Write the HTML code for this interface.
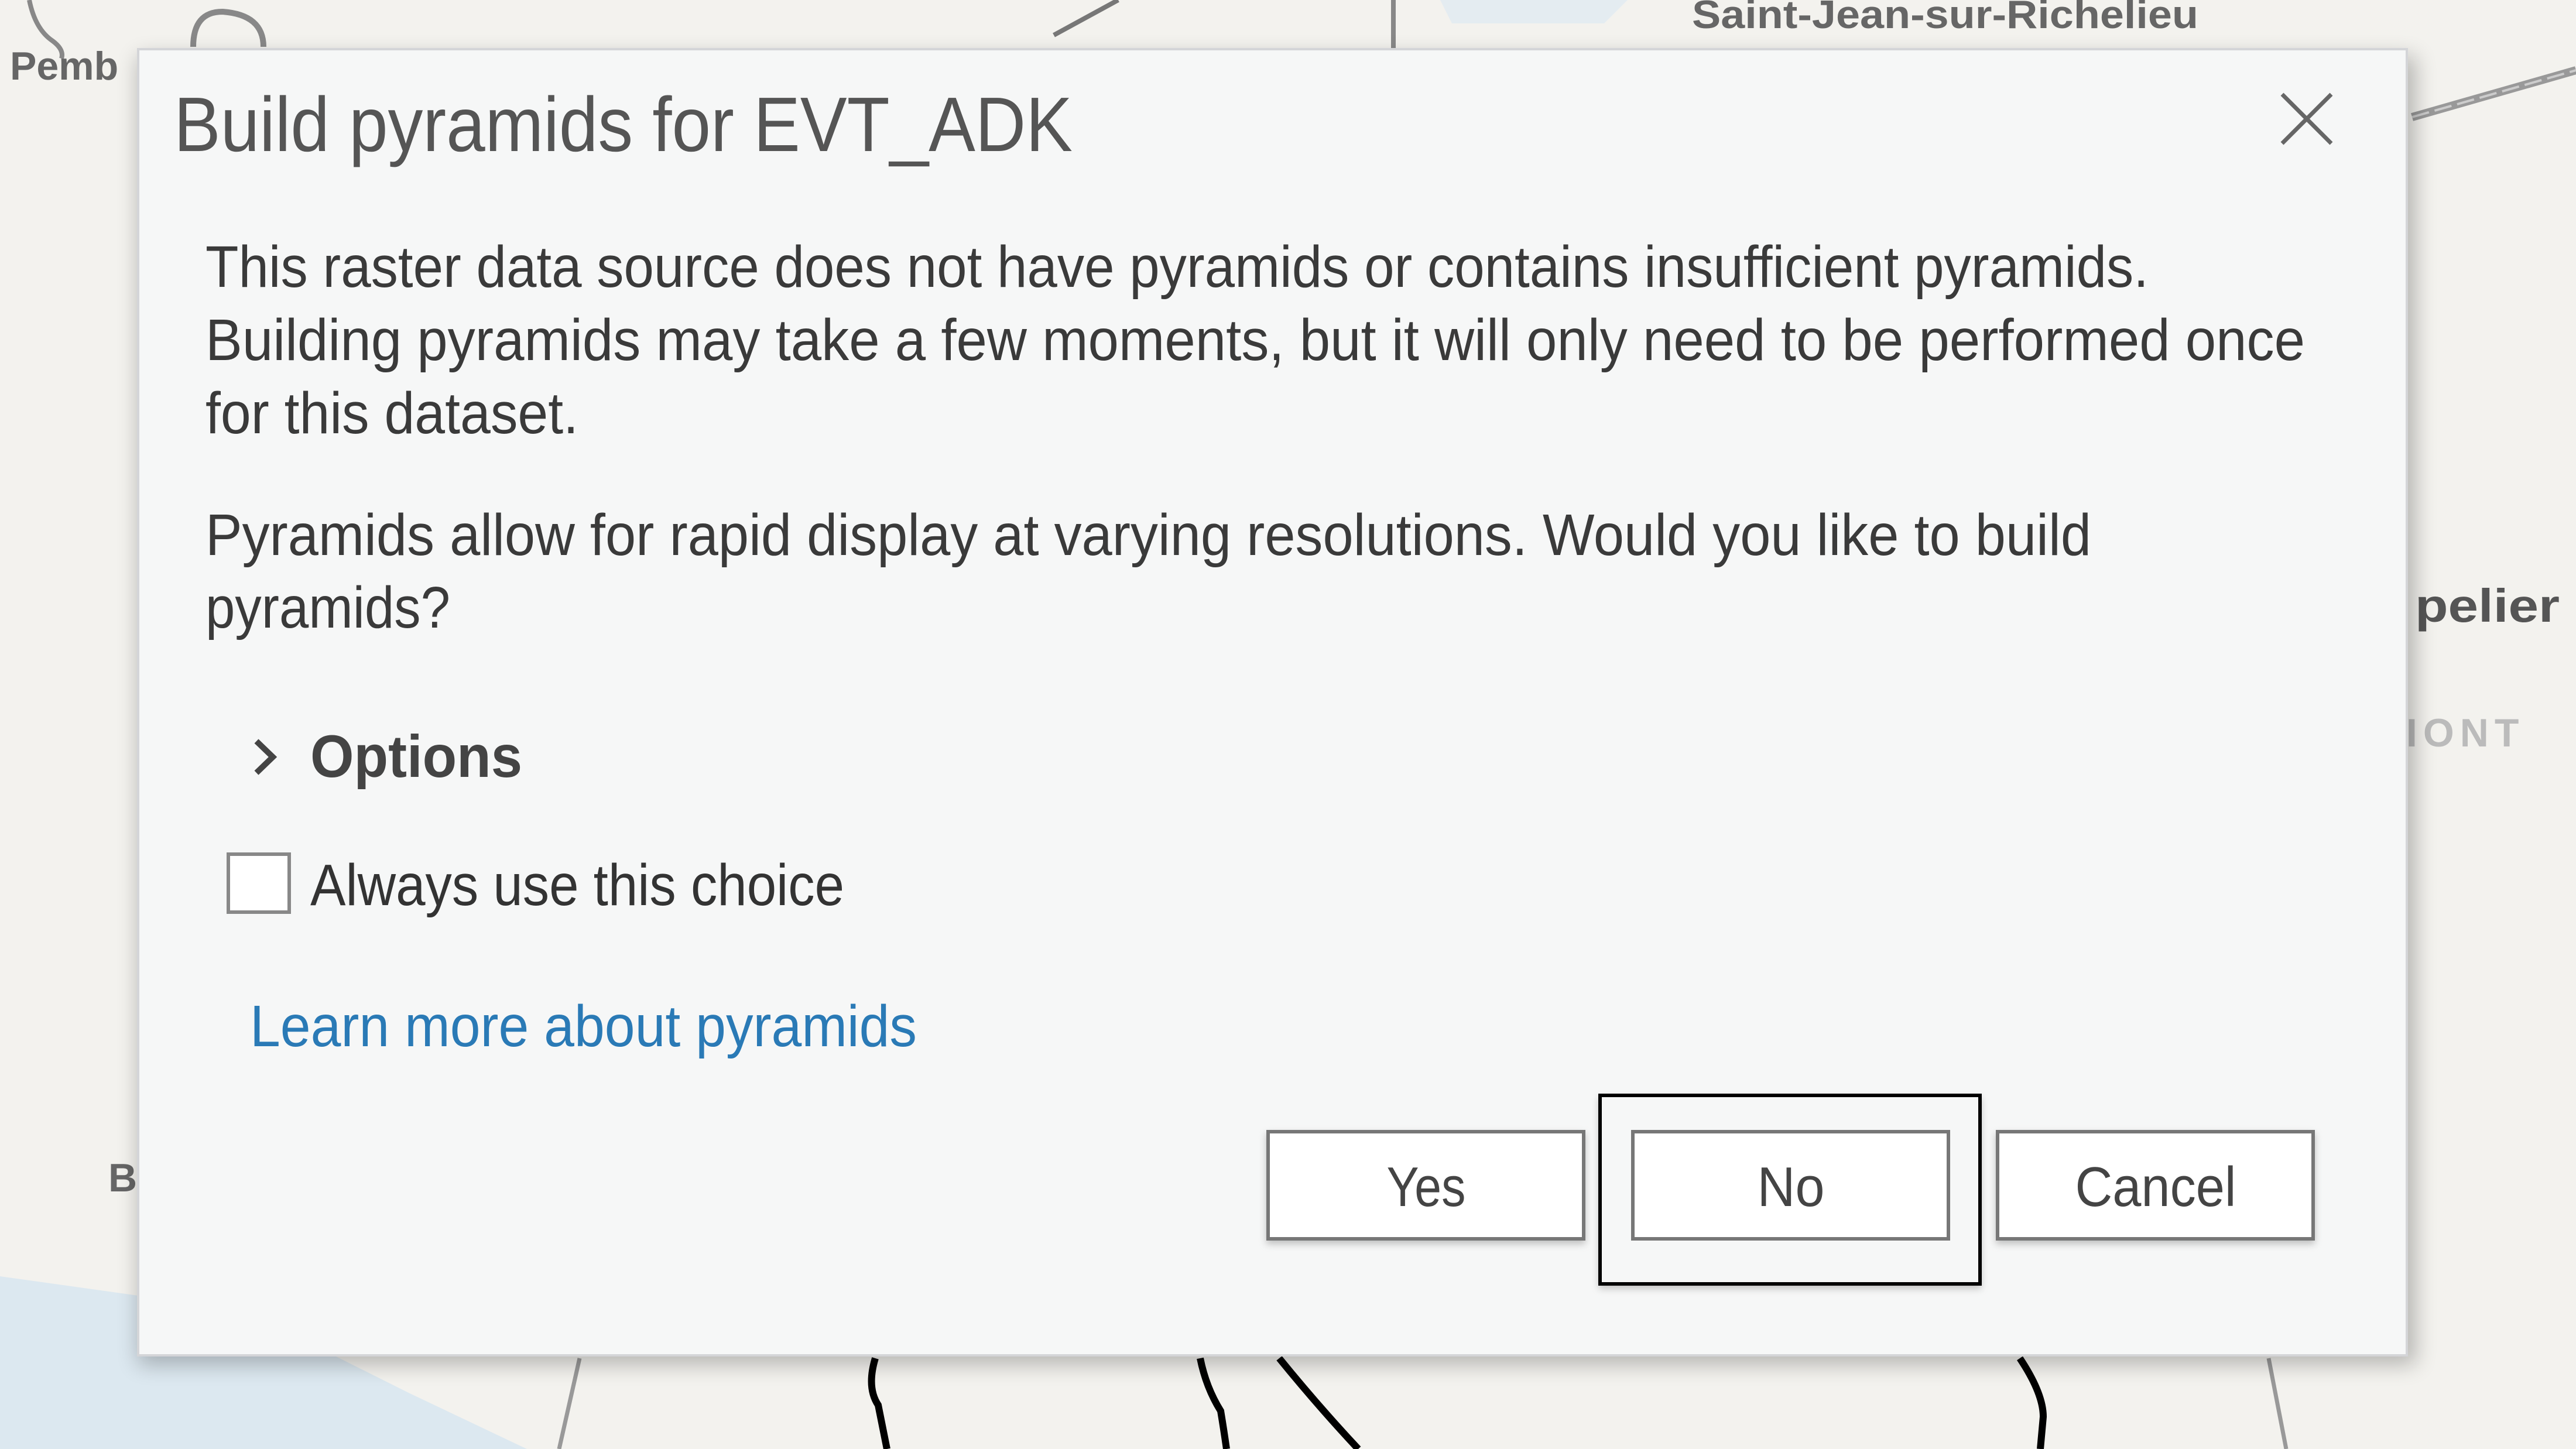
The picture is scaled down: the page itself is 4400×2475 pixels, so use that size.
<!DOCTYPE html>
<html><head><meta charset="utf-8"><style>
html,body{margin:0;padding:0;width:4400px;height:2475px;overflow:hidden;background:#f3f2ee}
svg{display:block}
</style></head><body>
<svg width="4400" height="2475" viewBox="0 0 4400 2475" xmlns="http://www.w3.org/2000/svg" font-family="'Liberation Sans', sans-serif">
<defs>
<filter id="sh" x="-5%" y="-5%" width="110%" height="112%"><feGaussianBlur stdDeviation="18"/></filter>
<filter id="bs" x="-10%" y="-20%" width="120%" height="150%"><feGaussianBlur stdDeviation="6"/></filter>
</defs>
<rect width="4400" height="2475" fill="#f3f2ee"/>
<path d="M0 2180 L250 2215 L520 2290 L700 2380 L900 2475 L0 2475 Z" fill="#dce8f0"/>
<path d="M2460 0 L2780 0 L2740 40 L2480 40 Z" fill="#e4ecf1"/>
<path d="M50 0 Q60 50 90 70 Q110 85 105 100" stroke="#888" stroke-width="8" fill="none"/>
<path d="M330 80 Q330 20 380 20 Q450 25 450 80" stroke="#888" stroke-width="10" fill="none"/>
<path d="M1800 60 L1910 0" stroke="#777" stroke-width="8" fill="none"/>
<path d="M2380 0 L2380 130" stroke="#888" stroke-width="8" fill="none"/>
<path d="M4120 200 L4400 120" stroke="#999" stroke-width="14" fill="none"/>
<path d="M4120 200 L4400 120" stroke="#ccc" stroke-width="4" fill="none" stroke-dasharray="30 10"/>
<path d="M990 2320 L955 2475" stroke="#999" stroke-width="7" fill="none"/>
<path d="M3875 2320 L3905 2475" stroke="#999" stroke-width="7" fill="none"/>
<path d="M1495 2320 Q1480 2370 1500 2400 L1515 2475" stroke="#000" stroke-width="12" fill="none"/>
<path d="M2050 2320 Q2060 2370 2085 2410 Q2090 2440 2095 2475" stroke="#000" stroke-width="12" fill="none"/>
<path d="M2185 2320 Q2250 2400 2320 2475" stroke="#000" stroke-width="12" fill="none"/>
<path d="M3450 2320 Q3490 2380 3490 2420 L3485 2475" stroke="#000" stroke-width="12" fill="none"/>
<text x="2890" y="48" font-size="68" font-weight="bold" fill="#666" textLength="865" lengthAdjust="spacingAndGlyphs">Saint-Jean-sur-Richelieu</text>
<text x="17" y="136" font-size="68" font-weight="bold" fill="#666">Pemb</text>
<text x="4125" y="1062" font-size="80" font-weight="bold" fill="#555" textLength="247" lengthAdjust="spacingAndGlyphs">pelier</text>
<text x="4110" y="1275" font-size="68" font-weight="bold" fill="#bbb" letter-spacing="10">IONT</text>
<text x="185" y="2035" font-size="68" font-weight="bold" fill="#666">B</text>
<rect x="236" y="96" width="3890" height="2235" fill="#000" opacity="0.25" filter="url(#sh)"/>
<rect x="236" y="84" width="3875" height="2231" fill="#f6f7f7" stroke="#d4d5d8" stroke-width="4"/>
<text x="297" y="258" font-size="132" fill="#555" textLength="1535" lengthAdjust="spacingAndGlyphs">Build pyramids for EVT_ADK</text>
<path d="M3898 161 L3982 245 M3982 161 L3898 245" stroke="#666" stroke-width="7"/>
<g font-size="100" fill="#3a3a3a">
<text x="351" y="490" textLength="3319" lengthAdjust="spacingAndGlyphs">This raster data source does not have pyramids or contains insufficient pyramids.</text>
<text x="351" y="615" textLength="3586" lengthAdjust="spacingAndGlyphs">Building pyramids may take a few moments, but it will only need to be performed once</text>
<text x="351" y="740" textLength="637" lengthAdjust="spacingAndGlyphs">for this dataset.</text>
<text x="351" y="948" textLength="3221" lengthAdjust="spacingAndGlyphs">Pyramids allow for rapid display at varying resolutions. Would you like to build</text>
<text x="351" y="1072" textLength="418" lengthAdjust="spacingAndGlyphs">pyramids?</text>
</g>
<path d="M438 1266 L466 1293 L438 1320" stroke="#444" stroke-width="10" fill="none"/>
<text x="530" y="1327" font-size="102" font-weight="bold" fill="#444" textLength="362" lengthAdjust="spacingAndGlyphs">Options</text>
<rect x="390" y="1459" width="104" height="99" fill="#fff" stroke="#888" stroke-width="6"/>
<text x="530" y="1546" font-size="100" fill="#333" textLength="912" lengthAdjust="spacingAndGlyphs">Always use this choice</text>
<text x="427" y="1787" font-size="100" fill="#2a7ab6" textLength="1139" lengthAdjust="spacingAndGlyphs">Learn more about pyramids</text>
<g filter="url(#bs)" opacity="0.5">
<rect x="2163" y="1936" width="545" height="189" fill="#888"/>
<rect x="2786" y="1936" width="545" height="189" fill="#888"/>
<rect x="3409" y="1936" width="545" height="189" fill="#888"/>
<rect x="2731" y="1875" width="653" height="326" fill="#888"/>
</g>
<rect x="2733" y="1871" width="649" height="322" fill="#f6f7f7" stroke="#000" stroke-width="6"/>
<rect x="2166" y="1933" width="539" height="183" fill="#fff" stroke="#777" stroke-width="6"/>
<rect x="2789" y="1933" width="539" height="183" fill="#fff" stroke="#777" stroke-width="6"/>
<rect x="3412" y="1933" width="539" height="183" fill="#fff" stroke="#777" stroke-width="6"/>
<g font-size="96" fill="#444" text-anchor="middle">
<text x="2436" y="2060" textLength="135" lengthAdjust="spacingAndGlyphs">Yes</text>
<text x="3059" y="2060" textLength="115" lengthAdjust="spacingAndGlyphs">No</text>
<text x="3682" y="2060" textLength="275" lengthAdjust="spacingAndGlyphs">Cancel</text>
</g>
</svg>
</body></html>
